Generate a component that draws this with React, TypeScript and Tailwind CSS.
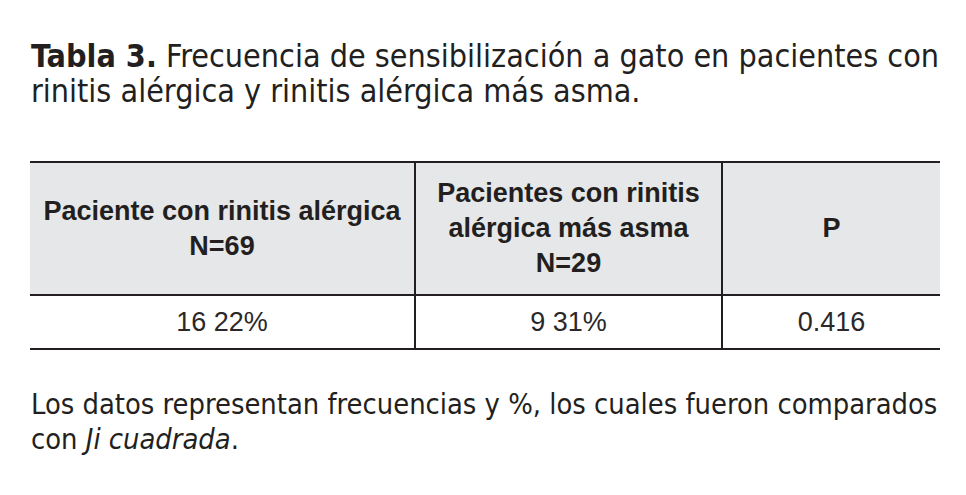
const ink = "text-[#231f20]";

const App = () => {
  return (
    <div className={`w-[966px] h-[495px] bg-white pl-[31px] ${ink}`}>
      <p
        className="w-[930px] pt-[39px] text-[32px] leading-[35px] whitespace-nowrap"
        style={{ fontFamily: "'DejaVu Sans Condensed', 'Open Sans', sans-serif" }}
      >
        <span className="font-bold">Tabla 3.</span> Frecuencia de sensibilización a gato en pacientes con
        <br />
        rinitis alérgica y rinitis alérgica más asma.
      </p>

      <div
        className="mt-[52px] -ml-px w-[910px] border-t-2 border-b-2 border-[#231f20]"
        style={{ fontFamily: "'Liberation Sans', Arial, sans-serif" }}
      >
        <div className="grid grid-cols-[384px_307px_219px] h-[133px] bg-[#e6e7e8] border-b-2 border-[#231f20] text-[27px] leading-[35px] font-bold">
          <div className="flex items-center justify-center text-center">
            <span>
              Paciente con rinitis alérgica
              <br />
              N=69
            </span>
          </div>
          <div className="flex items-center justify-center text-center border-l-2 border-[#231f20]">
            <span>
              Pacientes con rinitis
              <br />
              alérgica más asma
              <br />
              N=29
            </span>
          </div>
          <div className="flex items-center justify-center text-center border-l-2 border-[#231f20]">P</div>
        </div>
        <div className="grid grid-cols-[384px_307px_219px] h-[52px] text-[27px] text-[#2b2829]">
          <div className="flex items-center justify-center">16 22%</div>
          <div className="flex items-center justify-center border-l-2 border-[#231f20]">9 31%</div>
          <div className="flex items-center justify-center border-l-2 border-[#231f20]">0.416</div>
        </div>
      </div>

      <p
        className="w-[930px] mt-[37px] text-[28.8px] leading-[35px] whitespace-nowrap"
        style={{ fontFamily: "'DejaVu Sans Condensed', 'Open Sans', sans-serif" }}
      >
        Los datos representan frecuencias y %, los cuales fueron comparados
        <br />
        con <i>Ji cuadrada</i>.
      </p>
    </div>
  );
};

export default App;
